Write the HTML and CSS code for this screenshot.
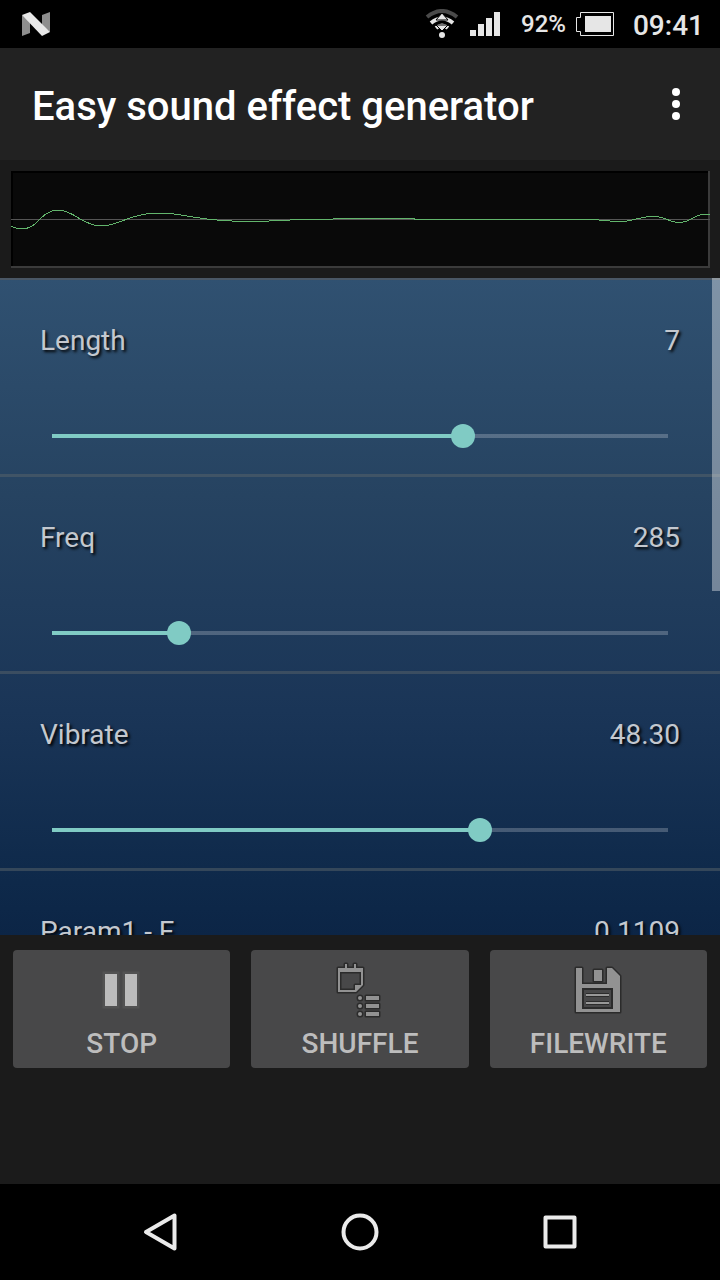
FILE: index.html
```
<!DOCTYPE html>
<html lang="en">
<head>
  <meta charset="UTF-8" />
  <meta name="viewport" content="width=device-width, initial-scale=1" />
  <title>Easy sound effect generator</title>
  <link rel="stylesheet" href="styles.css">
</head>
<body>
  <!-- Status bar -->
  <div class="status-bar">
    <svg class="status-logo" width="28" height="24" viewBox="0 0 28 24">
      <path d="M0 3 8 9V21L0 24ZM20 3 28 0V20L20 14Z" fill="#8e8e8e" />
      <path d="M0 3 8 0 28 20 20 24Z" fill="#e8e8e8" />
    </svg>
    <svg class="wifi" width="34" height="30" viewBox="0 0 34 30">
      <path d="M2 8Q17-4 32 8" fill="none" stroke="#4a4a4a" stroke-width="4" />
      <path d="M6 14Q17 5 28 14" fill="none" stroke="#e6e6e6" stroke-width="4" />
      <path d="M11 19Q17 14 23 19" fill="none" stroke="#e6e6e6" stroke-width="4" />
      <path d="M17 4 23 11H11ZM17 22 11 16H23Z" fill="#e6e6e6" stroke="#000" stroke-width="1" />
      <circle cx="17" cy="26" r="3" fill="#e6e6e6" />
    </svg>
    <svg class="signal" width="30" height="24" viewBox="0 0 30 24" fill="#e6e6e6">
      <path d="M0 18H6V24H0ZM8 12H14V24H8ZM16 6H22V24H16ZM24 0H30V24H24Z" />
    </svg>
    <span class="battery-level">92%</span>
    <svg class="battery" width="40" height="24" viewBox="0 0 40 24">
      <path d="M5.500.5H38.500V23.500H5.500V19.500H1.500V5.500H5.500Z" fill="none" stroke="#e6e6e6" />
      <path d="M10 4H36V20H10Z" fill="#e6e6e6" />
    </svg>
    <span class="clock">09:41</span>
  </div>

  <header class="app-bar">
    <h1>Easy sound effect generator</h1>
    <button class="menu-btn" aria-label="More options">
      <svg width="8" height="32" viewBox="0 0 8 32" fill="#fff">
        <circle cx="4" cy="4" r="4" />
        <circle cx="4" cy="16" r="4" />
        <circle cx="4" cy="28" r="4" />
      </svg>
    </button>
  </header>

  <!-- Waveform -->
  <div class="wave">
    <svg viewBox="0 0 698 97" preserveAspectRatio="none">
      <path d="M0 48.500H698" stroke="#555" />
      <path d="M0 55C4 57 7 58 10 58C20 58 24 53 29 48S39 39 47 39C57 39 65 46 71 49S82 55 90 55C99 55 108 51 116 48S134 42 147 42C168 42 182 47 200 48.500S220 50.500 240 50.500S275 48.500 300 48.500S320 47.500 340 47.500H402L404 48.500H578C590 48.500 595 50.500 609 50.500S625 45.500 641 45.500S655 51.500 667 51.500S682 43.500 692 43.500H698" fill="none" stroke="#62b56c" />
    </svg>
  </div>

  <!-- Parameters -->
  <main class="params">
    <div class="param">
      <div class="param-head">
        <label for="length">Length</label>
        <output for="length">7</output>
      </div>
      <input type="range" id="length" min="1" max="10" step="1" value="7" />
    </div>
    <div class="param">
      <div class="param-head">
        <label for="freq">Freq</label>
        <output for="freq">285</output>
      </div>
      <input type="range" id="freq" min="100" max="1000" step="1" value="285" />
    </div>
    <div class="param">
      <div class="param-head">
        <label for="vibrate">Vibrate</label>
        <output for="vibrate">48.30</output>
      </div>
      <input type="range" id="vibrate" min="0" max="69.5" step="0.01" value="48.3" data-digits="2" />
    </div>
    <div class="param">
      <div class="param-head">
        <label for="param1">Param1 - F</label>
        <output for="param1">0.1109</output>
      </div>
      <input type="range" id="param1" min="0" max="1" step="0.0001" value="0.1109" data-digits="4" />
    </div>
    <div class="scroll-thumb"></div>
  </main>

  <div class="actions">
    <button class="action-btn">
      <svg width="60" height="60" viewBox="0 0 60 60">
        <path d="M13 14H25V46H13ZM33 14H45V46H33Z" fill="#bcbcbc" stroke="#525252" stroke-width="5" paint-order="stroke" />
      </svg>
      STOP
    </button>
    <button class="action-btn">
      <svg width="60" height="60" viewBox="0 0 60 60">
        <g fill="#929292" stroke="#2b2b2b" stroke-width="3" stroke-linejoin="round" paint-order="stroke">
          <path fill-rule="evenodd" d="M8 8H15V4H17V8H24V4H26V8H33V25L26 32H8ZM10 12V30H25V25H31V12Z" />
          <circle cx="30" cy="38" r="2" />
          <circle cx="30" cy="46" r="2" />
          <circle cx="30" cy="54" r="2" />
          <path d="M36 36H49V40H36ZM36 44H49V48H36ZM36 52H49V56H36Z" />
        </g>
      </svg>
      SHUFFLE
    </button>
    <button class="action-btn">
      <svg width="60" height="60" viewBox="0 0 60 60">
        <g fill="#929292" stroke="#2b2b2b" stroke-width="3" stroke-linejoin="round" paint-order="stroke">
          <path d="M8 8H14V24H39V8H44L52 16V52H8Z" />
          <path d="M26 10H34V21H26Z" />
        </g>
        <path d="M14 28H45V49H14Z" fill="#2b2b2b" />
        <path d="M16 30H43V47H16Z" fill="#484849" />
        <path d="M18 35H41M18 43H41" stroke="#2b2b2b" stroke-width="4" />
        <path d="M18 35H41M18 43H41" stroke="#989898" stroke-width="2" />
      </svg>
      FILEWRITE
    </button>
  </div>

  <!-- System navigation -->
  <nav class="nav-bar">
    <button aria-label="Back">
      <svg width="40" height="40" viewBox="0 0 40 40"><path d="M34.500 3.500V36.500L6 20Z" /></svg>
    </button>
    <button aria-label="Home">
      <svg width="40" height="40" viewBox="0 0 40 40"><circle cx="20" cy="20" r="16.500" /></svg>
    </button>
    <button aria-label="Recent apps">
      <svg width="40" height="40" viewBox="0 0 40 40"><path d="M5.500 5.500H34.500V34.500H5.500Z" /></svg>
    </button>
  </nav>

  <script src="script.js"></script>
</body>
</html>
```

FILE: styles.css
```
:root {
  --bg: #1b1b1b;
  --bar: #222;
  --accent: #80cbc4;
  --text: #c3c8cf;
}
* {
  box-sizing: border-box;
}
body {
  display: flex;
  flex-direction: column;
  height: 100vh;
  margin: 0;
  background: var(--bg);
  color: var(--text);
  font-family: Roboto, sans-serif;
  font-size: 28px;
}
button {
  padding: 0;
  background: none;
  border: none;
  font: inherit;
  color: inherit;
  cursor: pointer;
}
svg {
  display: block;
}
.status-bar {
  display: flex;
  align-items: center;
  height: 48px;
  padding: 0 16px 0 22px;
  background: #000;
  color: #e6e6e6;
  font-weight: 500;
}
.status-logo {
  margin-right: auto;
}
.wifi {
  margin-right: 11px;
}
.signal {
  margin-right: 21px;
}
.battery-level {
  margin-right: 9px;
  font-size: 24px;
}
.battery {
  margin-right: 18px;
}
.clock {
  padding-top: 2px;
}
.app-bar {
  display: flex;
  align-items: center;
  justify-content: space-between;
  height: 112px;
  padding: 0 20px 0 32px;
  background: var(--bar);
  color: #fff;
}
.app-bar h1 {
  margin: 5px 0 0;
  font-size: 40px;
  font-weight: 500;
}
.menu-btn {
  padding: 20px;
}
.wave {
  flex: none;
  margin: 11px 10px 10px 11px;
  background: #090909;
  box-shadow: inset -2px -2px #3b3b3b, inset 2px 2px #000;
}
.wave svg {
  width: 100%;
  height: 97px;
  shape-rendering: crispEdges;
}
.params {
  position: relative;
  flex: 1;
  min-height: 0;
  padding-top: 2px;
  overflow: hidden;
  background: linear-gradient(#305171, #264361 33%, #1a3557 66%, #0e294a 92%, #0c2546);
  box-shadow: inset 0 2px #4a5765;
}
.param {
  padding: 43px 40px 26px;
  border-bottom: 3px solid rgba(90, 100, 105, 0.5);
}
.param-head {
  display: flex;
  justify-content: space-between;
  margin-bottom: 65px;
  line-height: 36px;
  text-shadow: 2px 2px 3px #000;
}
input[type="range"] {
  --track: calc(100% - 24px);
  appearance: none;
  display: block;
  width: 100%;
  height: 24px;
  margin: 0;
  background:
    linear-gradient(var(--accent), var(--accent)) 12px center / calc(var(--track) * var(--fill, 0)) 4px no-repeat,
    linear-gradient(#ffffff38, #ffffff38) center / var(--track) 4px no-repeat;
}
input[type="range"]::-webkit-slider-thumb {
  appearance: none;
  width: 24px;
  height: 24px;
  border-radius: 50%;
  background: var(--accent);
}
.scroll-thumb {
  position: absolute;
  top: 0;
  right: 0;
  width: 8px;
  height: 313px;
  background: rgba(255, 255, 255, 0.38);
}
.actions {
  display: flex;
  gap: 21px;
  padding: 15px 13px 116px;
}
.action-btn {
  display: flex;
  flex: 1;
  flex-direction: column;
  align-items: center;
  height: 118px;
  padding-top: 10px;
  border-radius: 4px;
  background: #484849;
  color: #bdbdbd;
  font-weight: 500;
  line-height: 48px;
}
.nav-bar {
  display: flex;
  justify-content: center;
  height: 96px;
  background: #000;
}
.nav-bar button {
  display: flex;
  align-items: center;
  justify-content: center;
  width: 200px;
}
.nav-bar svg {
  fill: none;
  stroke: #ebebeb;
  stroke-width: 4;
  stroke-linejoin: round;
}
```

FILE: script.js
```
document.querySelectorAll('input[type="range"]').forEach(input => {
  const output = document.querySelector(`output[for="${input.id}"]`);

  function update() {
    const value = parseFloat(input.value);
    const fill = (value - input.min) / (input.max - input.min);
    input.style.setProperty('--fill', fill);
    output.textContent = value.toFixed(input.dataset.digits || 0);
  }

  input.addEventListener('input', update);
  update();
});
```
